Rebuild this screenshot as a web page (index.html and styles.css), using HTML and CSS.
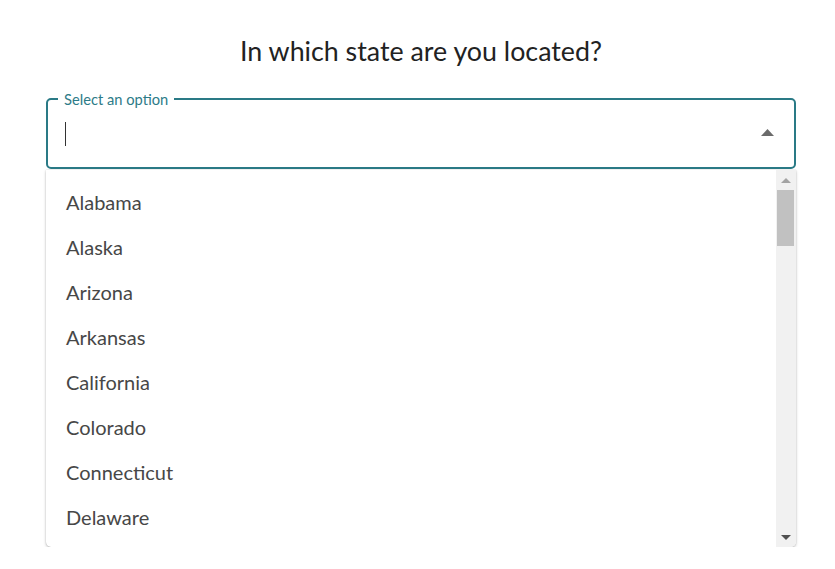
FILE: index.html
```html
<!DOCTYPE html>
<html lang="en">
<head>
<meta charset="utf-8">
<title>State selection</title>
<link rel="stylesheet" href="styles.css">
</head>
<body>
<main class="page">
  <h1 class="question">In which state are you located?</h1>
  <fieldset class="field">
    <legend class="field-label">Select an option</legend>
    <div class="field-row">
      <span class="caret"></span>
      <svg class="toggle" width="13" height="7" viewBox="0 0 13 7" aria-hidden="true"><polygon points="0,7 6.5,0 13,7" fill="#6b6b6b"/></svg>
    </div>
  </fieldset>
  <div class="dropdown">
    <ul class="options">
      <li class="option">Alabama</li>
      <li class="option">Alaska</li>
      <li class="option">Arizona</li>
      <li class="option">Arkansas</li>
      <li class="option">California</li>
      <li class="option">Colorado</li>
      <li class="option">Connecticut</li>
      <li class="option">Delaware</li>
    </ul>
    <div class="scrollbar">
      <div class="scroll-btn">
        <svg width="10" height="5" viewBox="0 0 10 5" aria-hidden="true"><polygon points="0,5 5,0 10,5" fill="#a3a3a3"/></svg>
      </div>
      <div class="scroll-thumb"></div>
      <div class="scroll-space"></div>
      <div class="scroll-btn">
        <svg width="10" height="5" viewBox="0 0 10 5" aria-hidden="true"><polygon points="0,0 10,0 5,5" fill="#505050"/></svg>
      </div>
    </div>
  </div>
</main>
</body>
</html>
```
FILE: styles.css
```css
html, body {
  margin: 0;
  padding: 0;
  background: #ffffff;
}

body {
  font-family: Lato, "Open Sans", "Liberation Sans", sans-serif;
  color: #222222;
}

.page {
  width: 750px;
  margin-left: 46px;
  display: flex;
  flex-direction: column;
}

.question {
  margin: 35px 0 0 0;
  font-size: 26.8px;
  font-weight: 400;
  line-height: 1.2;
  text-align: center;
  color: #222222;
  height: 55px;
}

.field {
  margin: 0;
  border: 2px solid #2a7a86;
  border-radius: 5px;
  padding: 0 20px 8px 17px;
  min-width: 0;
}

.field-label {
  margin-left: -7px;
  padding: 0 6px;
  font-size: 14.7px;
  line-height: 18px;
  color: #2d7b88;
}

.field-row {
  height: 51px;
  display: flex;
  align-items: center;
  justify-content: space-between;
}

.caret {
  display: block;
  width: 1px;
  height: 24px;
  background: #333333;
}

.toggle {
  display: block;
  margin-top: -3px;
}

.dropdown {
  margin-top: 1px;
  height: 377px;
  display: flex;
  background: #ffffff;
  border-radius: 0 0 5px 5px;
  box-shadow: 0 1px 3px rgba(0, 0, 0, 0.25), 0 0 1px rgba(0, 0, 0, 0.25);
  overflow: hidden;
}

.options {
  flex: 1;
  list-style: none;
  margin: 0;
  padding: 10px 0 0 20px;
  overflow: hidden;
}

.option {
  height: 45px;
  line-height: 45px;
  font-size: 20px;
  color: #474747;
}

.scrollbar {
  width: 20px;
  background: #f1f1f1;
  display: flex;
  flex-direction: column;
}

.scroll-btn {
  height: 20px;
  display: flex;
  align-items: center;
  justify-content: center;
}

.scroll-btn svg {
  display: block;
}

.scroll-thumb {
  height: 56px;
  margin: 0 2px 0 1px;
  background: #c1c1c1;
}

.scroll-space {
  flex: 1;
}
```
